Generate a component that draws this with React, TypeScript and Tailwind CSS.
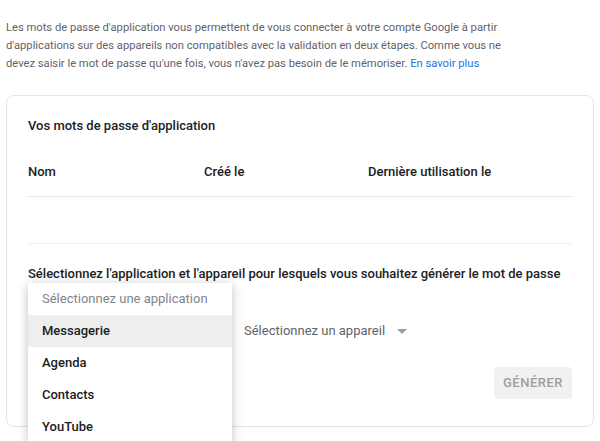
const apps = ["Messagerie", "Agenda", "Contacts", "YouTube"];

export default function App() {
  return (
    <div className="relative w-[600px] h-[441px] overflow-hidden bg-white font-['Roboto',sans-serif]">
      <p className="px-[6px] pt-[19px] whitespace-nowrap text-[11.2px] leading-[18px] text-[#5f6368]">
        Les mots de passe d'application vous permettent de vous connecter à votre compte Google à partir
        <br />
        d'applications sur des appareils non compatibles avec la validation en deux étapes. Comme vous ne
        <br />
        devez saisir le mot de passe qu'une fois, vous n'avez pas besoin de le mémoriser.{" "}
        <span className="text-[#1a73e8]">En savoir plus</span>
      </p>

      <div className="mx-[6px] mt-[22px] rounded-lg border border-[#e3e3e3] px-[21px] pt-[20px] pb-[27px]">
        <div className="text-[13px] leading-5 font-medium text-[#202124]">Vos mots de passe d'application</div>

        <div className="mt-[26px] grid grid-cols-[176px_164px_1fr] pb-[14px] border-b border-[#e8e8e8] text-[13px] leading-5 font-medium text-[#202124]">
          <span>Nom</span>
          <span>Créé le</span>
          <span>Dernière utilisation le</span>
        </div>
        <div className="h-[47px] border-b border-[#f0f0f0]" />

        <div className="mt-[20px] text-[13px] leading-5 font-medium text-[#202124]">
          Sélectionnez l'application et l'appareil pour lesquels vous souhaitez générer le mot de passe
        </div>

        <div className="mt-[27px] flex items-center gap-3 h-10">
          <div className="relative w-[204px] h-10">
            {/* open menu */}
            <div className="absolute left-0 top-[-28px] z-10 w-[204px] bg-white shadow-[0_2px_10px_rgba(0,0,0,0.25)]">
              <div className="h-8 px-[14px] flex items-center text-[13px] text-[#80868b]">
                Sélectionnez une application
              </div>
              {apps.map((a, i) => (
                <div
                  key={a}
                  className={`h-8 px-[14px] flex items-center text-[13px] font-medium text-[#202124] ${
                    i === 0 ? "bg-[#eeeeee]" : ""
                  }`}
                >
                  {a}
                </div>
              ))}
            </div>
          </div>
          <div className="flex items-center gap-[12px] text-[13px] text-[#5f6368]">
            <span>Sélectionnez un appareil</span>
            <svg width="10" height="5" viewBox="0 0 10 5">
              <path d="M0 0h10L5 5z" fill="#9e9e9e" />
            </svg>
          </div>
        </div>

        <div className="mt-[16px] flex justify-end">
          <div className="h-8 w-[78px] flex items-center justify-center bg-[#f1f1f1] rounded-sm text-[13px] font-medium tracking-[0.5px] text-[#9e9e9e]">
            GÉNÉRER
          </div>
        </div>
      </div>
    </div>
  );
}
